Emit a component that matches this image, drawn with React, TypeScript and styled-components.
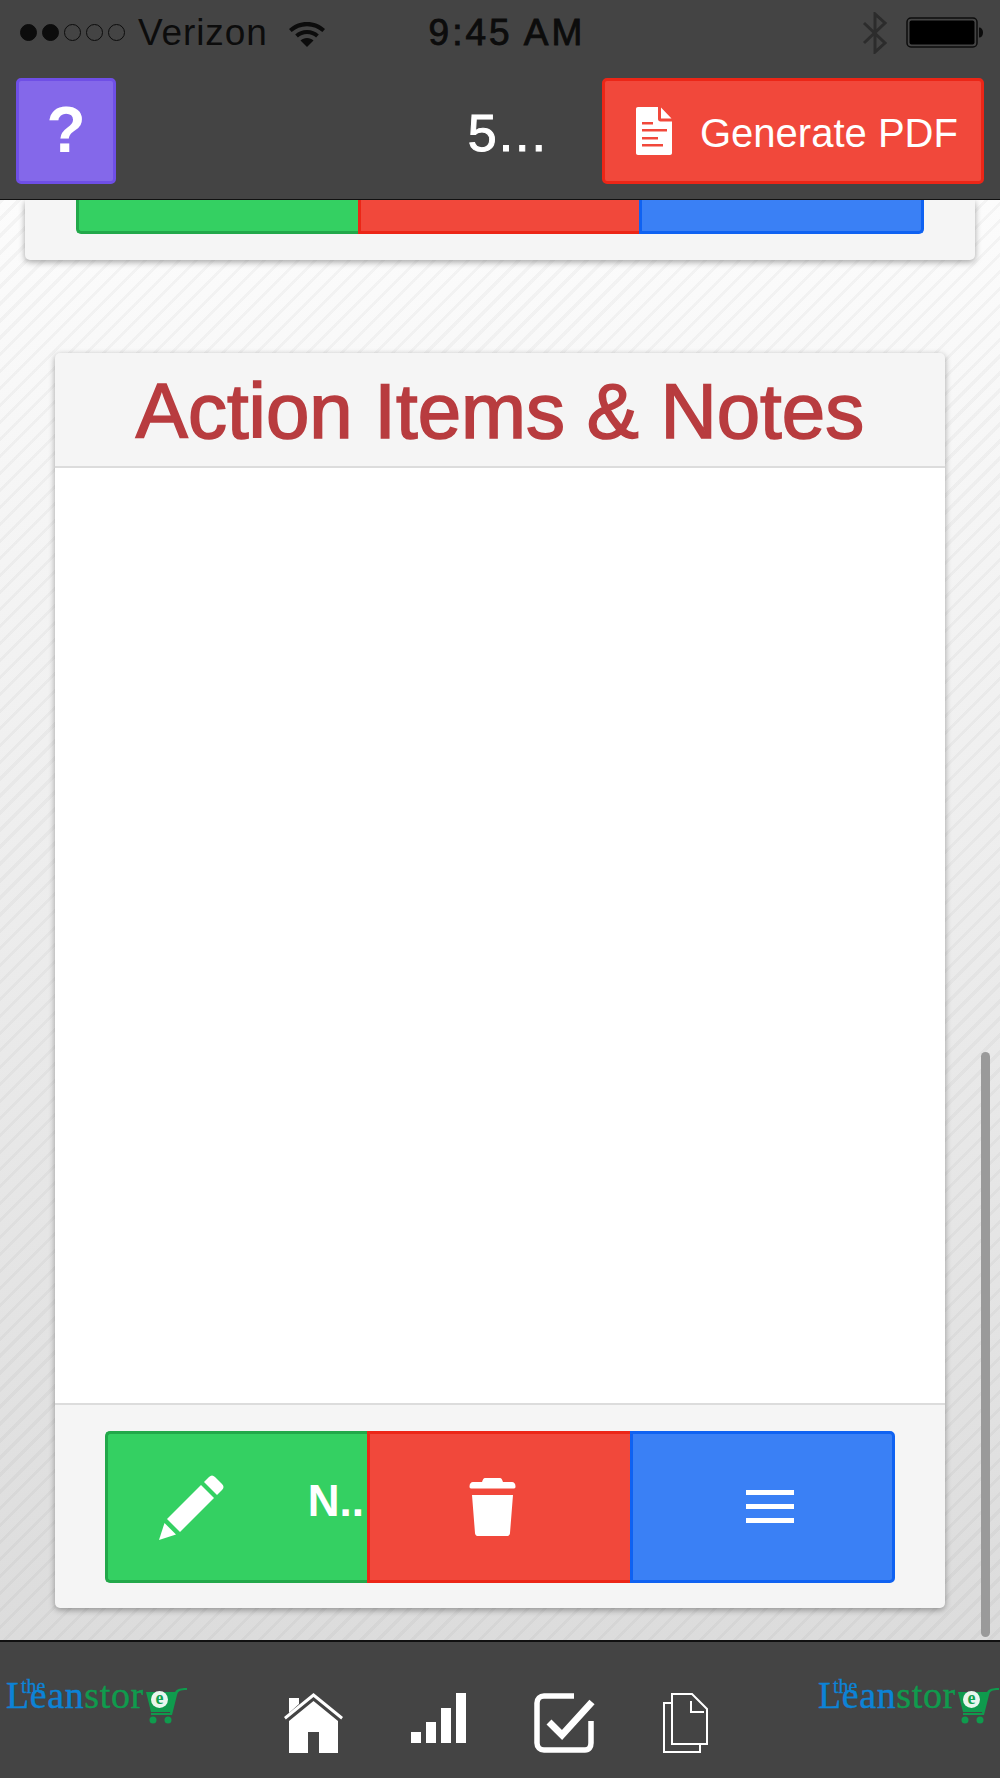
import React from 'react';
import styled, { createGlobalStyle } from 'styled-components';

const GlobalStyle = createGlobalStyle`
  html, body {
    margin: 0;
    padding: 0;
    background: #444;
  }
  * {
    box-sizing: border-box;
  }
`;

const Page = styled.div`
  display: flex;
  flex-direction: column;
  width: 1000px;
  height: 1778px;
  overflow: hidden;
  font-family: 'Liberation Sans', Arial, sans-serif;
`;

const Header = styled.header`
  flex: none;
  height: 200px;
  background: #444;
  border-bottom: 1px solid #111;
`;

const StatusBar = styled.div`
  display: grid;
  grid-template-columns: 1fr auto 1fr;
  align-items: center;
  height: 65px;
  padding: 0 16px 0 20px;
  color: #0c0c0c;
`;

const StatusLeft = styled.div`
  display: flex;
  align-items: center;
`;

const StatusRight = styled.div`
  display: flex;
  align-items: center;
  justify-content: flex-end;
  gap: 18px;
`;

const Dots = styled.div`
  display: flex;
  gap: 5px;
  margin-right: 13px;
`;

const Dot = styled.span<{ $on?: boolean }>`
  width: 17px;
  height: 17px;
  border-radius: 50%;
  border: 1.5px solid #0c0c0c;
  background: ${(p) => (p.$on ? '#0c0c0c' : 'transparent')};
`;

const Carrier = styled.span`
  font-size: 37px;
  letter-spacing: 0.9px;
  margin-right: 20px;
`;

const Clock = styled.span`
  font-size: 37px;
  letter-spacing: 3px;
  -webkit-text-stroke: 0.9px #0c0c0c;
  margin-left: 10px;
`;

const Toolbar = styled.div`
  display: flex;
  align-items: center;
  height: 106px;
  margin-top: 13px;
  padding: 0 16px;
`;

const HelpButton = styled.button`
  display: flex;
  align-items: center;
  justify-content: center;
  width: 100px;
  height: 106px;
  padding: 0 0 2px;
  background: #8468ea;
  border: 3px solid #6f4fe6;
  border-radius: 5px;
  color: #fff;
  font-family: inherit;
  font-size: 64px;
  font-weight: 700;
`;

const Title = styled.div`
  margin-left: auto;
  margin-right: 54px;
  padding-top: 4px;
  color: #fff;
  font-size: 52px;
  -webkit-text-stroke: 1px #fff;
  letter-spacing: 2px;
`;

const PdfButton = styled.button`
  display: flex;
  align-items: center;
  width: 382px;
  height: 106px;
  padding: 0 0 0 31px;
  background: #f1483b;
  border: 3px solid #ec2617;
  border-radius: 5px;
  color: #fff;
  font-family: inherit;
  font-size: 40px;
`;

const PdfLabel = styled.span`
  margin: 4px 0 0 28px;
  white-space: nowrap;
`;

const Content = styled.main`
  position: relative;
  flex: none;
  height: 1440px;
  overflow: hidden;
  background-color: #eee;
  background-image:
    repeating-linear-gradient(135deg, rgba(0, 0, 0, 0.03) 0 3px, transparent 3px 12px),
    linear-gradient(to bottom, #fcfcfc 0%, #dcdcdc 100%);
`;

const PrevCard = styled.section`
  margin: 0 25px;
  height: 60px;
  padding: 0 51px;
  background: #f5f5f5;
  border-radius: 0 0 5px 5px;
  box-shadow: 0 2px 6px rgba(0, 0, 0, 0.35);
`;

const Card = styled.section`
  display: flex;
  flex-direction: column;
  height: 1255px;
  margin: 93px 55px 0;
  background: #f5f5f5;
  border-radius: 5px;
  box-shadow: 0 2px 6px rgba(0, 0, 0, 0.35);
`;

const CardHead = styled.h2`
  flex: none;
  height: 115px;
  margin: 0;
  text-align: center;
  line-height: 116px;
  font-size: 78px;
  font-weight: 400;
  color: #b83c3f;
  -webkit-text-stroke: 1.6px #b83c3f;
  border-bottom: 2px solid #dcdcdc;
  white-space: nowrap;
`;

const CardBody = styled.div`
  flex: 1;
  background: #fff;
`;

const CardFoot = styled.div`
  flex: none;
  height: 205px;
  padding: 26px 50px 0;
  border-top: 2px solid #dcdcdc;
`;

const Segments = styled.div<{ $height: number; $cols: string }>`
  display: grid;
  grid-template-columns: ${(p) => p.$cols};
  height: ${(p) => p.$height}px;
`;

const palette = {
  green: ['#34d062', '#22a84a'],
  red: ['#f1483b', '#ec2617'],
  blue: ['#3a80f5', '#0f62f2'],
};

const Segment = styled.div<{ $tone: keyof typeof palette; $open?: boolean }>`
  display: flex;
  align-items: center;
  justify-content: center;
  min-width: 0;
  background: ${(p) => palette[p.$tone][0]};
  border: 3px solid ${(p) => palette[p.$tone][1]};
  border-top-width: ${(p) => (p.$open ? 0 : 3)}px;
  border-right-width: 0;
  &:first-child {
    border-radius: ${(p) => (p.$open ? '0 0 0 5px' : '5px 0 0 5px')};
  }
  &:last-child {
    border-right-width: 3px;
    border-radius: ${(p) => (p.$open ? '0 0 5px 0' : '0 5px 5px 0')};
  }
`;

const NewSegment = styled(Segment)`
  justify-content: space-between;
  padding: 0 3px 0 50px;
`;

const TrashSegment = styled(Segment)`
  padding-right: 16px;
`;

const MenuSegment = styled(Segment)`
  padding-left: 14px;
`;

const NewLabel = styled.span`
  margin-bottom: 12px;
  color: #fff;
  font-size: 44px;
  font-weight: 700;
`;

const Scrollbar = styled.div`
  position: absolute;
  top: 852px;
  right: 10px;
  width: 9px;
  height: 585px;
  border-radius: 5px;
  background: #9a9a9a;
`;

const Footer = styled.footer`
  display: flex;
  justify-content: space-between;
  flex: none;
  height: 138px;
  padding: 0 2px 0 6px;
  background: #444;
  border-top: 2px solid #111;
`;

const Logo = styled.div`
  position: relative;
  width: 180px;
  height: 48px;
  margin-top: 35px;
  font-family: 'Liberation Serif', serif;
`;

const LogoWord = styled.div`
  position: absolute;
  left: 0;
  bottom: 11px;
  font-size: 38px;
  line-height: 38px;
  letter-spacing: 0.6px;
  white-space: nowrap;
  color: #0f9b4d;
  -webkit-text-stroke: 0.4px currentColor;
`;

const LogoBlue = styled.span`
  color: #0c83d6;
`;

const LogoThe = styled.span`
  position: absolute;
  left: 15px;
  top: -1px;
  font-size: 20px;
  line-height: 20px;
  color: #0c83d6;
  -webkit-text-stroke: 0.3px currentColor;
`;

const LogoCart = styled.svg`
  position: absolute;
  left: 135px;
  top: 10px;
`;

const LogoE = styled.span`
  position: absolute;
  left: 145px;
  top: 14px;
  width: 17px;
  height: 17px;
  border-radius: 50%;
  background: #e9f6ee;
  color: #12a050;
  font-size: 18px;
  font-weight: 700;
  line-height: 15px;
  text-align: center;
`;

const NavIcons = styled.nav`
  display: flex;
  align-items: flex-start;
  gap: 68px;
  padding: 51px 12px 0 0;
`;

const Wifi = () => (
  <svg width="38" height="28" viewBox="0 0 38 28" fill="#0c0c0c">
    <path d="M19 3C12 3 6 5.600 1 10l2.600 3C7.800 9.400 13 7.200 19 7.200s11.200 2.200 15.400 5.800L37 10C32 5.600 26 3 19 3z" />
    <path d="M19 11c-4.600 0-8.600 1.700-11.800 4.400l2.700 3c2.400-2 5.500-3.300 9.100-3.300s6.700 1.300 9.100 3.300l2.700-3C27.600 12.700 23.600 11 19 11z" />
    <path d="M19 19c-2.600 0-4.800.9-6.500 2.400L19 28l6.500-6.600C23.800 19.900 21.600 19 19 19z" />
  </svg>
);

const Bluetooth = () => (
  <svg width="26" height="42" viewBox="0 0 26 42" fill="none" stroke="#2c2c2c" strokeWidth="3">
    <path d="M2 11l21 20-10 9V2l10 9L2 31" />
  </svg>
);

const Battery = () => (
  <svg width="78" height="32" viewBox="0 0 78 32">
    <rect x="1" y="1" width="70" height="29" rx="4" fill="none" stroke="#0c0c0c" strokeWidth="1.5" />
    <rect x="3.500" y="3.500" width="65" height="24" rx="2" fill="#000" />
    <path d="M73 10.500c2.500 0 4 2 4 5s-1.500 5-4 5z" fill="#0c0c0c" />
  </svg>
);

const FileIcon = () => (
  <svg width="36" height="48" viewBox="0 0 36 48">
    <path
      fill="#fff"
      fillRule="evenodd"
      d="M2 0h20v12c0 1.500 1 2.500 2.500 2.500H36V46c0 1.200-.8 2-2 2H2c-1.200 0-2-.8-2-2V2C0 .8.800 0 2 0zM25 .5L35.500 11.500H25zM6 15v2.500h11V15zM6 22v2.500h25V22zM6 30v2.500h16V30zM6 37v2.500h21V37z"
    />
  </svg>
);

const Pencil = () => (
  <svg width="67" height="67" viewBox="0 0 67 67" fill="#fff">
    <path d="M46 8l5-5c2-2 4-2 6 0l7 7c2 2 2 4 0 6l-5 5z" />
    <path d="M43 11l13 13-34 34-13-13z" />
    <path d="M6.500 49L18 60.500 1 66z" />
  </svg>
);

const Trash = () => (
  <svg width="47" height="58" viewBox="0 0 47 58" fill="#fff">
    <path d="M16 0h15c1.500 0 2 1.500 3 4h9c2 0 3.500 1.500 3.500 4.500 0 1-.5 2-1.500 2H2c-1 0-1.500-1-1.500-2C.5 5.500 2 4 4 4h9c1-2.500 1.500-4 3-4z" />
    <path d="M3 17h41l-3 38c0 1.500-1 3-2.500 3h-30C7 58 6 56.500 6 55z" />
  </svg>
);

const Hamburger = () => (
  <svg width="48" height="34" viewBox="0 0 48 34" fill="#fff">
    <rect y="0" width="48" height="5" />
    <rect y="14" width="48" height="5" />
    <rect y="28" width="48" height="5" />
  </svg>
);

const Home = () => (
  <svg width="59" height="60" viewBox="0 0 59 60" fill="#fff">
    <path d="M5 5h10v6L5 20z" />
    <path d="M29.500 0L59 24l-1.800 2.400L29.500 4 1.800 26.400 0 24z" />
    <path d="M29.500 8L54 28v32H35V39H24v21H5V28z" />
  </svg>
);

const Bars = () => (
  <svg width="55" height="50" viewBox="0 0 55 50" fill="#fff">
    <rect x="0" y="39" width="10" height="11" />
    <rect x="15" y="29" width="10" height="21" />
    <rect x="30" y="15" width="10" height="35" />
    <rect x="45" y="0" width="10" height="50" />
  </svg>
);

const CheckBox = () => (
  <svg width="61" height="60" viewBox="0 0 61 60" fill="none" stroke="#fff">
    <path d="M40 3H10c-4 0-7 3-7 7v40c0 4 3 7 7 7h41c4 0 6-3 6-7V28" strokeWidth="5.500" />
    <path d="M15 29l13 13 30-33" strokeWidth="7" />
  </svg>
);

const Pages = () => (
  <svg width="45" height="60" viewBox="0 0 45 60" fill="none" stroke="#fff" strokeWidth="2">
    <path d="M9 10H1v49h36v-8" />
    <path d="M9 1h20l15 15v35H9z" />
    <path d="M28 8v11h13" />
  </svg>
);

const LeanLogo = () => (
  <Logo>
    <LogoThe>the</LogoThe>
    <LogoWord>
      <LogoBlue>Lean</LogoBlue>stor
    </LogoWord>
    <LogoCart width="46" height="38" viewBox="0 0 46 38" fill="#0f9b4d">
      <path d="M5 5h30l-5 20H10z" />
      <path d="M33 7c1.500-4 4-6 13-6v2c-7 0-9 1-10 5l-5 20H10v-2h19z" />
      <circle cx="12" cy="33" r="3.500" />
      <circle cx="27" cy="33" r="3.500" />
    </LogoCart>
    <LogoE>e</LogoE>
  </Logo>
);

const App = () => {
  return (
    <Page>
      <GlobalStyle />
      <Header>
        <StatusBar>
          <StatusLeft>
            <Dots>
              <Dot $on />
              <Dot $on />
              <Dot />
              <Dot />
              <Dot />
            </Dots>
            <Carrier>Verizon</Carrier>
            <Wifi />
          </StatusLeft>
          <Clock>9:45 AM</Clock>
          <StatusRight>
            <Bluetooth />
            <Battery />
          </StatusRight>
        </StatusBar>
        <Toolbar>
          <HelpButton>?</HelpButton>
          <Title>5...</Title>
          <PdfButton>
            <FileIcon />
            <PdfLabel>Generate PDF</PdfLabel>
          </PdfButton>
        </Toolbar>
      </Header>
      <Content>
        <PrevCard>
          <Segments $height={34} $cols="282px 281px 285px">
            <Segment $tone="green" $open />
            <Segment $tone="red" $open />
            <Segment $tone="blue" $open />
          </Segments>
        </PrevCard>
        <Card>
          <CardHead>Action Items &amp; Notes</CardHead>
          <CardBody />
          <CardFoot>
            <Segments $height={152} $cols="262px 263px 265px">
              <NewSegment $tone="green">
                <Pencil />
                <NewLabel>N..</NewLabel>
              </NewSegment>
              <TrashSegment $tone="red">
                <Trash />
              </TrashSegment>
              <MenuSegment $tone="blue">
                <Hamburger />
              </MenuSegment>
            </Segments>
          </CardFoot>
        </Card>
        <Scrollbar />
      </Content>
      <Footer>
        <LeanLogo />
        <NavIcons>
          <Home />
          <Bars />
          <CheckBox />
          <Pages />
        </NavIcons>
        <LeanLogo />
      </Footer>
    </Page>
  );
};

export default App;
